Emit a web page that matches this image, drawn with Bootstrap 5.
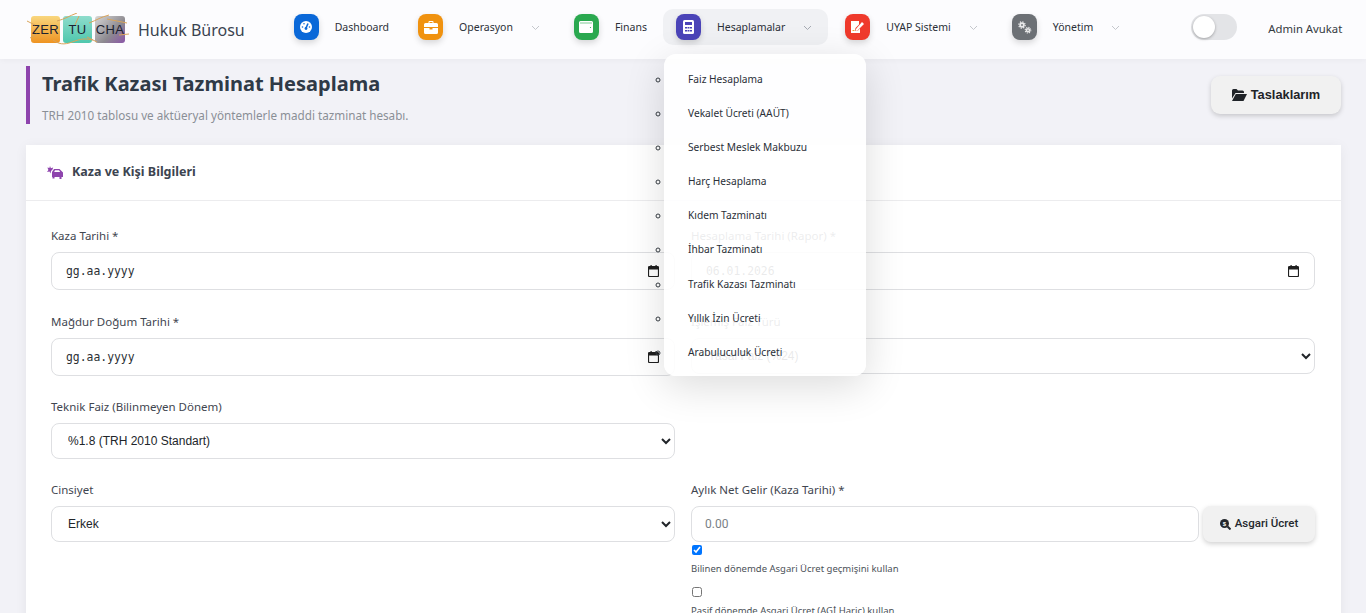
<!DOCTYPE html>
<html lang="tr">
<head>
<meta charset="UTF-8">
<title>Trafik Kazası Tazminat Hesaplama</title>
<link rel="stylesheet" href="https://cdn.jsdelivr.net/npm/bootstrap@5.3.3/dist/css/bootstrap.min.css">
<style>
html, body { height: 613px; overflow: hidden; }
body { background: #f2f2f7; font-family: "Noto Sans", sans-serif; color: #212529; }
.topbar { height: 59px; background: #fcfcfe; padding-left: 31px; box-shadow: 0 1px 6px rgba(0,0,0,.04); position: relative; z-index: 2; }
.logo-wrap { position: relative; gap: 3px; }
.logo-vines { position: absolute; left: -4px; top: -3px; }
.logo-box { width: 29px; height: 27px; border-radius: 3px; font-family: "Liberation Sans", sans-serif; font-size: 13px; letter-spacing: .3px; color: #1c2230; display: flex; align-items: center; justify-content: center; }
.logo-a { background: linear-gradient(#f9d77e, #ee9322); }
.logo-b { background: linear-gradient(#8edccc, #4fc7ad); }
.logo-c { width: 30px; background: linear-gradient(135deg, #d8d8d8, #8d8a90 60%, #8a55a8); }
.brand-text { font-size: 16px; color: #3a4350; margin-left: 13px; margin-right: 36px; }
.menu-item { height: 36px; padding: 2px 16px 0 13px; border-radius: 10px; font-size: 10.5px; color: #2b3038; margin-top: -5px; }
.menu-item.has-caret { margin-right: 5px; }
.menu-item.is-open { background: #f0f1f4; margin-right: 4px; }
.menu-ico { width: 25px; height: 26px; border-radius: 8px; margin: -2px 16px 0 0; box-shadow: 0 3px 6px rgba(0,0,0,.15); display: flex; align-items: center; justify-content: center; flex-shrink: 0; }
.menu-caret { margin-left: 18px; }
.theme-switch { width: 46px; height: 26px; border-radius: 13px; background: #e3e4e7; margin-left: 50px; margin-top: -6px; position: relative; }
.theme-knob { position: absolute; left: 2px; top: 2px; width: 22px; height: 22px; border-radius: 50%; background: #fff; box-shadow: 0 1px 3px rgba(0,0,0,.3); }
.user-name { font-size: 11.3px; color: #343a40; margin-left: 31px; }
.page-wrap { padding: 7px 25px 0 26px; }
.title-block { border-left: 4px solid #8e44ad; height: 58px; padding-left: 12px; }
.title-block h1 { font-family: "Noto Sans", sans-serif; font-size: 20px; font-weight: 700; color: #2f3a47; margin: 4px 0 0; line-height: 28px; }
.title-block p { font-size: 11.7px; color: #8a8f96; margin: 9px 0 0; line-height: 16px; }
.draft-btn { height: 38px; width: 130px; margin-top: 10px; background: #f1f1f1; border: 0; border-radius: 9px; font-family: "Liberation Sans", sans-serif; font-size: 12.8px; font-weight: 700; color: #1f2328; box-shadow: 0 2px 5px rgba(0,0,0,.18); }
.form-card { background: #fff; margin-top: 21px; height: 500px; box-shadow: 0 2px 12px rgba(0,0,0,.06); }
.form-card-head { height: 56px; border-bottom: 1px solid #ececee; padding-left: 21px; font-size: 12.5px; font-weight: 700; color: #3c4450; }
.form-card-head svg { margin-right: 9px; }
.form-area { padding: 26px 26px 0 25px; column-gap: 16px; display: grid; grid-template-columns: 624px 624px; grid-template-rows: 86px 85px 83px auto; }
.fld-label { font-size: 11.5px; color: #3f4650; line-height: 17px; margin-bottom: 8px; display: block; }
.fld-date { height: 38px; font-family: "DejaVu Sans Mono", monospace; font-size: 11.4px; padding: 8px 15px 6px 14px; border-radius: 8px; border-color: #dedfe2; color: #2b2f34; display: flex; align-items: center; justify-content: space-between; }
.fld-date svg { margin-top: -2px; }
.fld-select { height: 36px; font-family: "Liberation Sans", sans-serif; font-size: 12px; padding-left: 12px; border-radius: 8px; border-color: #dedfe2; color: #212529; appearance: auto; -webkit-appearance: auto; background-image: none; }
.fld-input { height: 36px; font-family: Roboto, sans-serif; font-size: 12px; padding-left: 13px; border-radius: 8px; border-color: #dedfe2; }
.fld-input::placeholder { color: #7a7f86; }
.asgari-btn { width: 112px; height: 36px; margin-left: 4px; background: #f1f1f1; border: 0; border-radius: 8px; font-family: Roboto, sans-serif; font-size: 11.5px; font-weight: 500; color: #24282d; box-shadow: 0 2px 5px rgba(0,0,0,.18); flex-shrink: 0; }
.chk { display: block; width: 10px; height: 10px; margin: 3px 0 0 1px; }
.chk-label { font-size: 9.5px; color: #4b5158; line-height: 14px; margin: 7px 0 11px; }
.drop-menu { position: absolute; left: 664px; top: 54px; width: 202px; height: 322px; background: rgba(255,255,255,.9); border-radius: 12px; box-shadow: 0 10px 40px rgba(0,0,0,.14); margin: 0; padding: 8px 0 0 6px; list-style: circle; z-index: 5; }
.drop-menu li { height: 34.1px; font-size: 10.2px; line-height: 34px; color: #2b3038; padding-left: 18px; }
.drop-menu li::marker { font-size: 10px; color: #343a40; }
</style>
</head>
<body>
<nav class="topbar d-flex align-items-center">
  <div class="logo-wrap d-flex align-items-center">
    <span class="logo-box logo-a">ZER</span>
    <span class="logo-box logo-b">TU</span>
    <span class="logo-box logo-c">CHA</span>
    <svg class="logo-vines" width="104" height="33" viewBox="0 0 104 33" fill="none" stroke="#d9a45b" stroke-width="1"><path d="M0 8 8 12M3 25l7-4M26 27c8 6 14 4 22 1s12-2 18-1M30 8c8-2 12-5 20-8M52 3l-4 9M62 10c8-3 12-6 20-8M80 6l20 4M92 22l10-1M60 24l10 5"/></svg>
  </div>
  <span class="brand-text">Hukuk Bürosu</span>

  <div class="menu-item d-flex align-items-center">
    <span class="menu-ico" style="background:#0a68d8">
      <svg width="14" height="14" viewBox="0 0 14 14"><circle cx="7" cy="7" r="6" fill="#fff"/><path d="M7 8 9 3.500" stroke="#0a68d8" stroke-width="1.600"/><circle cx="7" cy="8.500" r="1.400" fill="#0a68d8"/><circle cx="3.500" cy="7" r=".8" fill="#0a68d8"/><circle cx="10.500" cy="7" r=".8" fill="#0a68d8"/><circle cx="5" cy="3.800" r=".8" fill="#0a68d8"/></svg>
    </span>Dashboard
  </div>
  <div class="menu-item has-caret d-flex align-items-center">
    <span class="menu-ico" style="background:#f0920f">
      <svg width="14" height="13" viewBox="0 0 14 13"><path d="M4.500 2V1a1 1 0 0 1 1-1h3a1 1 0 0 1 1 1v1h3A1.500 1.500 0 0 1 14 3.500V6H0V3.500A1.500 1.500 0 0 1 1.500 2Zm1 0h3V1h-3ZM0 7h5.500v1.500h3V7H14v4.500A1.500 1.500 0 0 1 12.500 13h-11A1.500 1.500 0 0 1 0 11.500Z" fill="#fff"/></svg>
    </span>Operasyon
    <svg class="menu-caret" width="9" height="6" viewBox="0 0 9 6"><path d="M1 1l3.500 3.500L8 1" fill="none" stroke="#c4c7cc" stroke-width="1"/></svg>
  </div>
  <div class="menu-item d-flex align-items-center">
    <span class="menu-ico" style="background:#2aa84f">
      <svg width="14" height="12" viewBox="0 0 14 12"><path d="M1.500 0h11A1.500 1.500 0 0 1 14 1.500v9a1.500 1.500 0 0 1-1.500 1.500h-11A1.500 1.500 0 0 1 0 10.500v-9A1.500 1.500 0 0 1 1.500 0Z" fill="#fff"/><path d="M1 2h12" stroke="#2aa84f" stroke-width=".6"/><circle cx="11.500" cy="6.500" r=".6" fill="#2aa84f"/></svg>
    </span>Finans
  </div>
  <div class="menu-item is-open d-flex align-items-center">
    <span class="menu-ico" style="background:#4b44b8">
      <svg width="11" height="14" viewBox="0 0 11 14"><rect width="11" height="14" rx="1.500" fill="#fff"/><rect x="2" y="2" width="7" height="3" fill="#4b44b8"/><path d="M2 7h2v1.500H2Zm2.500 0h2v1.500h-2ZM7 7h2v1.500H7ZM2 10h2v1.500H2Zm2.500 0h2v1.500h-2ZM7 10h2v1.500H7Z" fill="#4b44b8"/></svg>
    </span>Hesaplamalar
    <svg class="menu-caret" width="9" height="6" viewBox="0 0 9 6"><path d="M1 1l3.500 3.500L8 1" fill="none" stroke="#a6aab2" stroke-width="1"/></svg>
  </div>
  <div class="menu-item has-caret d-flex align-items-center">
    <span class="menu-ico" style="background:#ef3a2c">
      <svg width="15" height="14" viewBox="0 0 15 14"><path d="M1 1h8v3.500L5.500 8 5 11l3-.5L10 8.500V13H1Z" fill="#fff"/><path d="M12 2l2 2-6.500 6.500L5.500 11l.5-2Z" fill="#fff"/><path d="M2.500 10.500h2" stroke="#f0a33c" stroke-width="1"/></svg>
    </span>UYAP Sistemi
    <svg class="menu-caret" width="9" height="6" viewBox="0 0 9 6"><path d="M1 1l3.500 3.500L8 1" fill="none" stroke="#c4c7cc" stroke-width="1"/></svg>
  </div>
  <div class="menu-item has-caret d-flex align-items-center">
    <span class="menu-ico" style="background:#6c7075">
      <svg width="15" height="13" viewBox="0 0 15 13" fill="none" stroke="#e9e9ea"><circle cx="5" cy="4" r="1.800" stroke-width="1.800"/><circle cx="5" cy="4" r="3.200" stroke-width="1.200" stroke-dasharray="1.300 1.200"/><circle cx="11" cy="9.200" r="1.500" stroke-width="1.600"/><circle cx="11" cy="9.200" r="2.800" stroke-width="1.100" stroke-dasharray="1.200 1"/></svg>
    </span>Yönetim
    <svg class="menu-caret" width="9" height="6" viewBox="0 0 9 6"><path d="M1 1l3.500 3.500L8 1" fill="none" stroke="#c4c7cc" stroke-width="1"/></svg>
  </div>
  <div class="theme-switch"><span class="theme-knob"></span></div>
  <span class="user-name">Admin Avukat</span>
</nav>

<ul class="drop-menu">
  <li>Faiz Hesaplama</li>
  <li>Vekalet Ücreti (AAÜT)</li>
  <li>Serbest Meslek Makbuzu</li>
  <li>Harç Hesaplama</li>
  <li>Kıdem Tazminatı</li>
  <li>İhbar Tazminatı</li>
  <li>Trafik Kazası Tazminatı</li>
  <li>Yıllık İzin Ücreti</li>
  <li>Arabuluculuk Ücreti</li>
</ul>

<main class="page-wrap">
  <div class="d-flex justify-content-between">
    <div class="title-block">
      <h1>Trafik Kazası Tazminat Hesaplama</h1>
      <p>TRH 2010 tablosu ve aktüeryal yöntemlerle maddi tazminat hesabı.</p>
    </div>
    <button class="draft-btn btn d-flex align-items-center justify-content-center gap-1" type="button">
      <svg width="15" height="12" viewBox="0 0 15 12"><path d="M0 1.500A1.500 1.500 0 0 1 1.500 0h3l1.500 1.500h4.500A1.500 1.500 0 0 1 12 3v1H3.500L0 9.500Z" fill="#1f2328"/><path d="M3.800 5H15l-3.500 7H0Z" fill="#1f2328"/></svg>
      Taslaklarım
    </button>
  </div>

  <section class="form-card">
    <div class="form-card-head d-flex align-items-center">
      <svg width="16" height="14" viewBox="0 0 16 14"><path d="M5 6 7 3h5.500L16 6.500V11h-1.500v2h-2v-2h-5v1.500h-2V11H5ZM8 4.300 7.200 6h6l-1.200-1.700Z" fill="#8e44ad"/><path d="M3 0l.9 2.200 2.300-.8L5.500 3.500 4 5l-.5 2.500-1-2L0 6l1.400-2L.4 1.500l2 .6Z" fill="#8e44ad"/></svg>
      Kaza ve Kişi Bilgileri
    </div>
    <div class="form-area">
      <div>
        <label class="fld-label">Kaza Tarihi *</label>
        <div class="form-control fld-date">gg.aa.yyyy
          <svg width="11" height="12" viewBox="0 0 11 12"><path d="M1.500 1.500h8a1 1 0 0 1 1 1v8a1 1 0 0 1-1 1h-8a1 1 0 0 1-1-1v-8a1 1 0 0 1 1-1Z" fill="none" stroke="#1f1f1f" stroke-width="1.200"/><path d="M1 2h9v2.500H1ZM2.500 0h1.200v2H2.500Zm5 0h1.200v2H7.500Z" fill="#1f1f1f"/></svg>
        </div>
      </div>
      <div>
        <label class="fld-label">Hesaplama Tarihi (Rapor) *</label>
        <div class="form-control fld-date">06.01.2026
          <svg width="11" height="12" viewBox="0 0 11 12"><path d="M1.500 1.500h8a1 1 0 0 1 1 1v8a1 1 0 0 1-1 1h-8a1 1 0 0 1-1-1v-8a1 1 0 0 1 1-1Z" fill="none" stroke="#1f1f1f" stroke-width="1.200"/><path d="M1 2h9v2.500H1ZM2.500 0h1.200v2H2.500Zm5 0h1.200v2H7.500Z" fill="#1f1f1f"/></svg>
        </div>
      </div>
      <div>
        <label class="fld-label">Mağdur Doğum Tarihi *</label>
        <div class="form-control fld-date">gg.aa.yyyy
          <svg width="11" height="12" viewBox="0 0 11 12"><path d="M1.500 1.500h8a1 1 0 0 1 1 1v8a1 1 0 0 1-1 1h-8a1 1 0 0 1-1-1v-8a1 1 0 0 1 1-1Z" fill="none" stroke="#1f1f1f" stroke-width="1.200"/><path d="M1 2h9v2.500H1ZM2.500 0h1.200v2H2.500Zm5 0h1.200v2H7.500Z" fill="#1f1f1f"/></svg>
        </div>
      </div>
      <div>
        <label class="fld-label">İşlemiş Faiz Türü</label>
        <select class="form-select fld-select"><option>Yasal Faiz (%24)</option></select>
      </div>
      <div>
        <label class="fld-label">Teknik Faiz (Bilinmeyen Dönem)</label>
        <select class="form-select fld-select"><option>%1.8 (TRH 2010 Standart)</option></select>
      </div>
      <div></div>
      <div>
        <label class="fld-label">Cinsiyet</label>
        <select class="form-select fld-select"><option>Erkek</option></select>
      </div>
      <div>
        <label class="fld-label">Aylık Net Gelir (Kaza Tarihi) *</label>
        <div class="d-flex">
          <input class="form-control fld-input" type="text" placeholder="0.00">
          <button class="asgari-btn btn d-flex align-items-center justify-content-center gap-1" type="button">
            <svg width="11" height="11" viewBox="0 0 11 11"><circle cx="4.500" cy="4.500" r="4.500" fill="#24282d"/><path d="M7.500 7.500 10.500 10.500" stroke="#24282d" stroke-width="2"/><text x="4.500" y="6.800" font-size="6" font-weight="700" fill="#fff" text-anchor="middle" font-family="Liberation Sans">$</text></svg>
            Asgari Ücret
          </button>
        </div>
        <input class="chk" type="checkbox" checked>
        <p class="chk-label">Bilinen dönemde Asgari Ücret geçmişini kullan</p>
        <input class="chk" type="checkbox">
        <p class="chk-label">Pasif dönemde Asgari Ücret (AGİ Hariç) kullan</p>
      </div>
    </div>
  </section>
</main>
</body>
</html>
